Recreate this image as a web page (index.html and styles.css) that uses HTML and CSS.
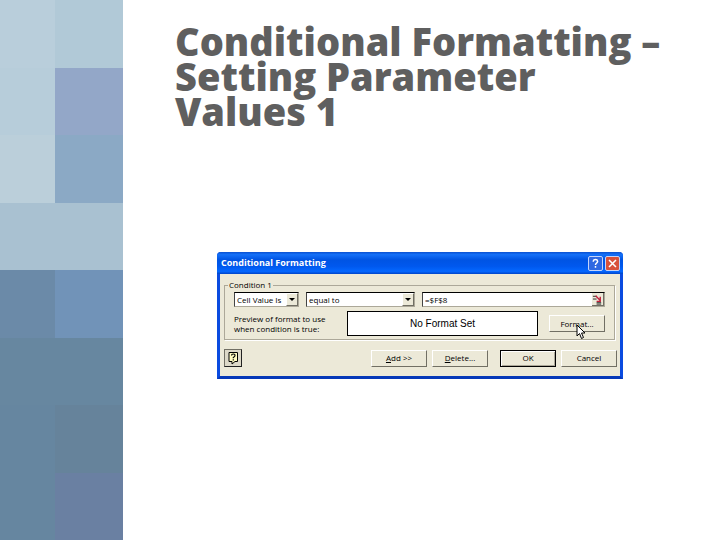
FILE: index.html
```
<!DOCTYPE html>
<html lang="en">
<head>
<meta charset="UTF-8">
<meta name="viewport" content="width=device-width, initial-scale=1.0">
<title>Conditional Formatting</title>
<link rel="stylesheet" href="styles.css">
</head>
<body>

<div class="slide">
    <div class="tiles">
        <div class="tile t1"></div><div class="tile t2"></div>
        <div class="tile t3"></div><div class="tile t4"></div>
        <div class="tile t5"></div><div class="tile t6"></div>
        <div class="tile t7"></div><div class="tile t8"></div>
        <div class="tile t9"></div><div class="tile t10"></div>
        <div class="tile t11"></div><div class="tile t12"></div>
        <div class="tile t13"></div><div class="tile t14"></div>
        <div class="tile t15"></div><div class="tile t16"></div>
    </div>

    <div class="content">
        <h1>Conditional Formatting –<br>Setting Parameter<br>Values 1</h1>

        <form class="dialog">
            <div class="titlebar">
                <h2>Conditional Formatting</h2>
                <button type="button" class="cap help" aria-label="Help">
                    <svg viewBox="0 0 15 15"><path d="M5 5.5V4.5Q5.3 3 7.5 3T10 5Q10 6.2 8.700 7T7.500 9.300M7.500 10.500V12.300" fill="none" stroke="#fff" stroke-width="1.700"/></svg>
                </button>
                <button type="button" class="cap close" aria-label="Close">
                    <svg viewBox="0 0 15 15"><path d="M3.500 3.500L11.500 11.500M11.500 3.500L3.500 11.500" stroke="#fff" stroke-width="1.800"/></svg>
                </button>
            </div>

            <div class="body">
                <fieldset>
                    <legend>Condition 1</legend>
                    <div class="row">
                        <div class="combo combo-type">
                            <select aria-label="Condition type"><option>Cell Value Is</option></select>
                            <span class="arrow"></span>
                        </div>
                        <div class="combo combo-operator">
                            <select aria-label="Operator"><option>equal to</option></select>
                            <span class="arrow"></span>
                        </div>
                        <div class="combo combo-value">
                            <input type="text" aria-label="Value" value="=$F$8">
                            <button type="button" class="picker" aria-label="Select range">
                                <svg viewBox="0 0 12 12"><path d="M1 2.500H5M1 5.500H5M5 9.500H10M5 11H10" stroke="#222" fill="none"/><path d="M4 2L9 7M9 3V8H5" stroke="#c0203a" stroke-width="1.500" fill="none"/></svg>
                            </button>
                        </div>
                    </div>
                    <div class="row preview-row">
                        <p>Preview of format to use<br>when condition is true:</p>
                        <div class="preview">No Format Set</div>
                        <div class="format">
                            <button type="button" class="btn">Format...</button>
                            <svg class="pointer" viewBox="0 0 10 16"><path d="M1 1V12L3.500 9.500L5.500 14.500L7.500 13.500L5.500 9H9Z" fill="#fff" stroke="#000"/></svg>
                        </div>
                    </div>
                </fieldset>

                <div class="actions">
                    <button type="button" class="assistant" aria-label="Office Assistant">
                        <svg viewBox="0 0 14 14"><path d="M3 1.500H11.500V10.500H9L6 13V10.500H3Z" fill="#fffbc0" stroke="#000"/><path d="M5.500 4.500Q5.500 3 7.300 3T9 4.500Q9 5.500 7.300 6.500V7.200M7.300 8.200V9.500" fill="none" stroke="#000" stroke-width="1.200"/></svg>
                    </button>
                    <button type="button" class="btn"><u>A</u>dd &gt;&gt;</button>
                    <button type="button" class="btn"><u>D</u>elete...</button>
                    <button type="button" class="btn ok">OK</button>
                    <button type="button" class="btn">Cancel</button>
                </div>
            </div>
        </form>
    </div>
</div>

</body>
</html>
```
FILE: styles.css
```
* {
    box-sizing: border-box;
}
body {
    margin: 0;
    background-color: #fff;
    font-family: "Liberation Sans", Arial, sans-serif;
}
.slide {
    display: grid;
    grid-template-columns: 123px 1fr;
    min-height: 100vh;
}

/* Colour tiles down the left edge */
.tiles {
    display: grid;
    grid-template-columns: 55px 1fr;
    grid-template-rows: repeat(8, 1fr);
}
.t1 { background-color: #b9cedb; }
.t2 { background-color: #b1c9d7; }
.t3 { background-color: #b7cdda; }
.t4 { background-color: #93a7c8; }
.t5 { background-color: #bbcfda; }
.t6 { background-color: #8ba9c5; }
.t7, .t8 { background-color: #a9c1d1; }
.t9 { background-color: #6b8aa8; }
.t10 { background-color: #7193b8; }
.t11, .t12 { background-color: #6787a0; }
.t13, .t15 { background-color: #6686a0; }
.t14 { background-color: #66839b; }
.t16 { background-color: #6a80a2; }

.content {
    padding: 24px 52px;
}
h1 {
    margin: 0 0 123px;
    font-family: "Open Sans", "Arial Black", sans-serif;
    font-size: 38px;
    font-weight: 800;
    line-height: 35px;
    color: #5f5f5f;
    white-space: nowrap;
}

/* Dialog window */
.dialog {
    max-width: 406px;
    margin: 0 42px;
    border: 3px solid #0a4be0;
    border-top: 0;
    border-bottom-color: #0638b8;
    border-radius: 4px 4px 0 0;
    background-color: #ece9d8;
    font-size: 8px;
    line-height: 10px;
    color: #000;
}
.titlebar {
    display: flex;
    align-items: center;
    gap: 2px;
    height: 22px;
    margin: 0 -3px;
    padding: 0 3px 0 4px;
    border-radius: 4px 4px 0 0;
    background: linear-gradient(#0a50d0, #1470f8 12%, #0054e3 35%, #0058ee 65%, #0468ff 88%, #0044c8);
}
.titlebar h2 {
    flex: 1;
    margin: 0;
    font-family: "Open Sans", sans-serif;
    font-size: 9px;
    font-weight: 700;
    color: #fff;
}
button, input, select {
    margin: 0;
    padding: 0;
    font: inherit;
    color: inherit;
}
svg {
    display: block;
    width: 100%;
}
.cap {
    width: 15px;
    height: 15px;
    border: 1px solid #c4d4fa;
    border-radius: 2px;
    background-color: #2f68e2;
}
.close {
    background-color: #d8513b;
}
.body {
    padding: 6px 3px 9px 4px;
}
fieldset {
    min-width: 0;
    margin: 0 2px 0 0;
    padding: 2px 9px 3px;
    border: 1px solid #aca899;
    box-shadow: 1px 1px #fff;
}
legend {
    margin-left: -6px;
    padding: 0 1px;
    font-family: "Open Sans", sans-serif;
}
.row {
    display: flex;
    gap: 7px;
}
.combo {
    position: relative;
    height: 15px;
    border: 1px solid #aca899;
    border-top-color: #000;
    border-left-color: #444;
    background-color: #fff;
    font-family: "Open Sans", sans-serif;
}
.combo-type {
    width: 65px;
}
.combo-operator {
    width: 109px;
}
.combo-value {
    flex: 1;
    display: flex;
}
.combo select, .combo input {
    display: block;
    width: 100%;
    min-width: 0;
    height: 13px;
    padding: 0 2px;
    border: 0;
    background: none;
    appearance: none;
}
.arrow {
    position: absolute;
    top: 0;
    right: 0;
    width: 12px;
    height: 13px;
    border: 1px solid #fff;
    border-right-color: #716f64;
    border-bottom-color: #716f64;
    background-color: #ece9d8;
    pointer-events: none;
}
.arrow::after {
    content: "";
    position: absolute;
    top: 4px;
    left: 2px;
    border: 3px solid transparent;
    border-top-color: #000;
    border-bottom: 0;
}
.picker {
    flex: none;
    width: 12px;
    height: 13px;
    border: 0;
    border-right: 1px solid #716f64;
    border-bottom: 1px solid #716f64;
    background-color: #ece9d8;
}
.preview-row {
    align-items: center;
    gap: 11px;
    margin-top: 4px;
}
.preview-row p {
    width: 102px;
    margin: 0;
    font-family: "Open Sans", sans-serif;
    white-space: nowrap;
}
.preview {
    flex: 1;
    padding: 7px 0 6px;
    border: 1px solid #000;
    background-color: #fff;
    font-size: 10px;
    text-align: center;
}
.format {
    position: relative;
}
.btn {
    width: 56px;
    height: 17px;
    border: 1px solid #fff;
    border-right-color: #716f64;
    border-bottom-color: #716f64;
    background-color: #ece9d8;
    font-family: "Open Sans", sans-serif;
}
.pointer {
    position: absolute;
    top: 9px;
    left: 27px;
    width: 10px;
    height: 16px;
}
.actions {
    display: flex;
    align-items: center;
    gap: 5px;
    margin-top: 9px;
}
.assistant {
    width: 18px;
    height: 18px;
    margin-right: auto;
    padding: 1px;
    border: 1px solid #716f64;
    border-right-color: #222;
    border-bottom-color: #222;
    background-color: #ddd9c8;
}
.ok {
    margin-left: 7px;
    border: 1px solid #000;
    box-shadow: inset 1px 1px #fff, inset -1px -1px #aca899;
}
```
